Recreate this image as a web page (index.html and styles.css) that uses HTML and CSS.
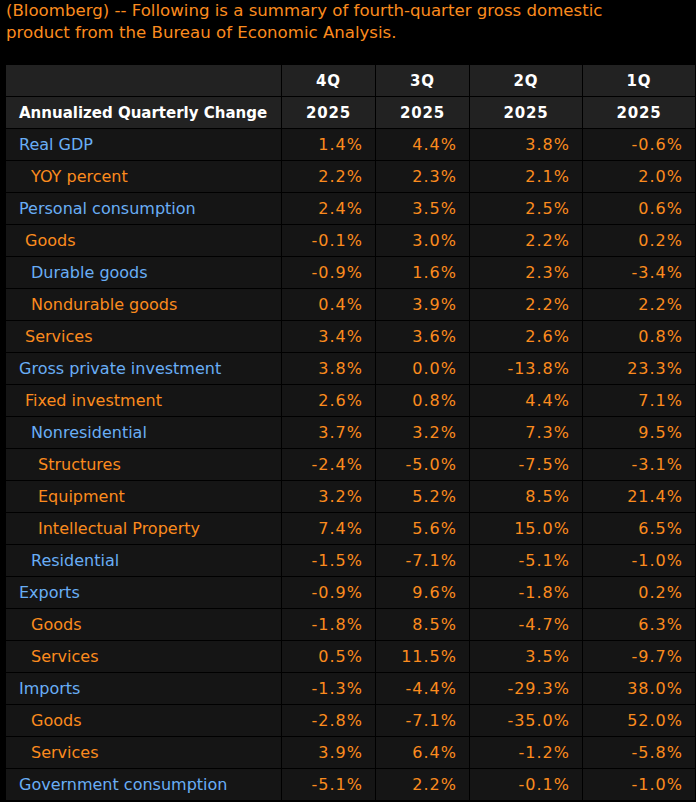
FILE: index.html
```html
<!DOCTYPE html>
<html lang="en">
<head>
<meta charset="utf-8">
<title>GDP summary</title>
<link rel="stylesheet" href="styles.css">
</head>
<body>
<p class="intro">(Bloomberg) -- Following is a summary of fourth-quarter gross domestic product from the Bureau of Economic Analysis.</p>
<table class="gdp">
  <colgroup>
    <col class="c-label"><col class="c-q"><col class="c-q"><col class="c-w"><col class="c-w">
  </colgroup>
  <thead>
    <tr><th></th><th>4Q</th><th>3Q</th><th>2Q</th><th>1Q</th></tr>
    <tr><th class="title">Annualized Quarterly Change</th><th>2025</th><th>2025</th><th>2025</th><th>2025</th></tr>
  </thead>
  <tbody>
    <tr><td class="lbl blue l0">Real GDP</td><td>1.4%</td><td>4.4%</td><td>3.8%</td><td>-0.6%</td></tr>
    <tr><td class="lbl orange l2">YOY percent</td><td>2.2%</td><td>2.3%</td><td>2.1%</td><td>2.0%</td></tr>
    <tr><td class="lbl blue l0">Personal consumption</td><td>2.4%</td><td>3.5%</td><td>2.5%</td><td>0.6%</td></tr>
    <tr><td class="lbl orange l1">Goods</td><td>-0.1%</td><td>3.0%</td><td>2.2%</td><td>0.2%</td></tr>
    <tr><td class="lbl blue l2">Durable goods</td><td>-0.9%</td><td>1.6%</td><td>2.3%</td><td>-3.4%</td></tr>
    <tr><td class="lbl orange l2">Nondurable goods</td><td>0.4%</td><td>3.9%</td><td>2.2%</td><td>2.2%</td></tr>
    <tr><td class="lbl orange l1">Services</td><td>3.4%</td><td>3.6%</td><td>2.6%</td><td>0.8%</td></tr>
    <tr><td class="lbl blue l0">Gross private investment</td><td>3.8%</td><td>0.0%</td><td>-13.8%</td><td>23.3%</td></tr>
    <tr><td class="lbl orange l1">Fixed investment</td><td>2.6%</td><td>0.8%</td><td>4.4%</td><td>7.1%</td></tr>
    <tr><td class="lbl blue l2">Nonresidential</td><td>3.7%</td><td>3.2%</td><td>7.3%</td><td>9.5%</td></tr>
    <tr><td class="lbl orange l3">Structures</td><td>-2.4%</td><td>-5.0%</td><td>-7.5%</td><td>-3.1%</td></tr>
    <tr><td class="lbl orange l3">Equipment</td><td>3.2%</td><td>5.2%</td><td>8.5%</td><td>21.4%</td></tr>
    <tr><td class="lbl orange l3">Intellectual Property</td><td>7.4%</td><td>5.6%</td><td>15.0%</td><td>6.5%</td></tr>
    <tr><td class="lbl blue l2">Residential</td><td>-1.5%</td><td>-7.1%</td><td>-5.1%</td><td>-1.0%</td></tr>
    <tr><td class="lbl blue l0">Exports</td><td>-0.9%</td><td>9.6%</td><td>-1.8%</td><td>0.2%</td></tr>
    <tr><td class="lbl orange l2">Goods</td><td>-1.8%</td><td>8.5%</td><td>-4.7%</td><td>6.3%</td></tr>
    <tr><td class="lbl orange l2">Services</td><td>0.5%</td><td>11.5%</td><td>3.5%</td><td>-9.7%</td></tr>
    <tr><td class="lbl blue l0">Imports</td><td>-1.3%</td><td>-4.4%</td><td>-29.3%</td><td>38.0%</td></tr>
    <tr><td class="lbl orange l2">Goods</td><td>-2.8%</td><td>-7.1%</td><td>-35.0%</td><td>52.0%</td></tr>
    <tr><td class="lbl orange l2">Services</td><td>3.9%</td><td>6.4%</td><td>-1.2%</td><td>-5.8%</td></tr>
    <tr><td class="lbl blue l0">Government consumption</td><td>-5.1%</td><td>2.2%</td><td>-0.1%</td><td>-1.0%</td></tr>
  </tbody>
</table>
</body>
</html>
```
FILE: styles.css
```css
html, body {
  margin: 0;
  padding: 0;
  background: #000;
}
body {
  font-family: "DejaVu Sans", Verdana, sans-serif;
  color: #fb8b1e;
  overflow: hidden;
}
.intro {
  margin: 0;
  padding: 0 0 0 6px;
  font-size: 16.6px;
  line-height: 22px;
  width: 640px;
  height: 64px;
}
.gdp {
  margin-left: 5px;
  border-collapse: separate;
  border-spacing: 1px;
  table-layout: fixed;
  width: 691px;
  font-size: 16px;
}
.c-label { width: 275px; }
.c-q { width: 93px; }
.c-w { width: 112px; }
.gdp th, .gdp td {
  height: 31px;
  padding: 0;
  box-sizing: border-box;
  white-space: nowrap;
  vertical-align: middle;
}
.gdp th {
  background: #222;
  color: #fff;
  font-size: 15px;
  font-weight: bold;
  text-align: center;
  letter-spacing: 0.8px;
}
.gdp th.title {
  text-align: left;
  padding-left: 13px;
  letter-spacing: 0;
}
.gdp td {
  background: #151515;
  color: #fb8b1e;
  text-align: right;
  padding-right: 12px;
  letter-spacing: 1px;
}
.gdp td.lbl {
  text-align: left;
  padding-right: 0;
  letter-spacing: 0;
}
.gdp td.blue { color: #69aef5; }
.gdp td.orange { color: #fb8b1e; }
.gdp td.l0 { padding-left: 13px; }
.gdp td.l1 { padding-left: 19px; }
.gdp td.l2 { padding-left: 25px; }
.gdp td.l3 { padding-left: 32px; }
```
